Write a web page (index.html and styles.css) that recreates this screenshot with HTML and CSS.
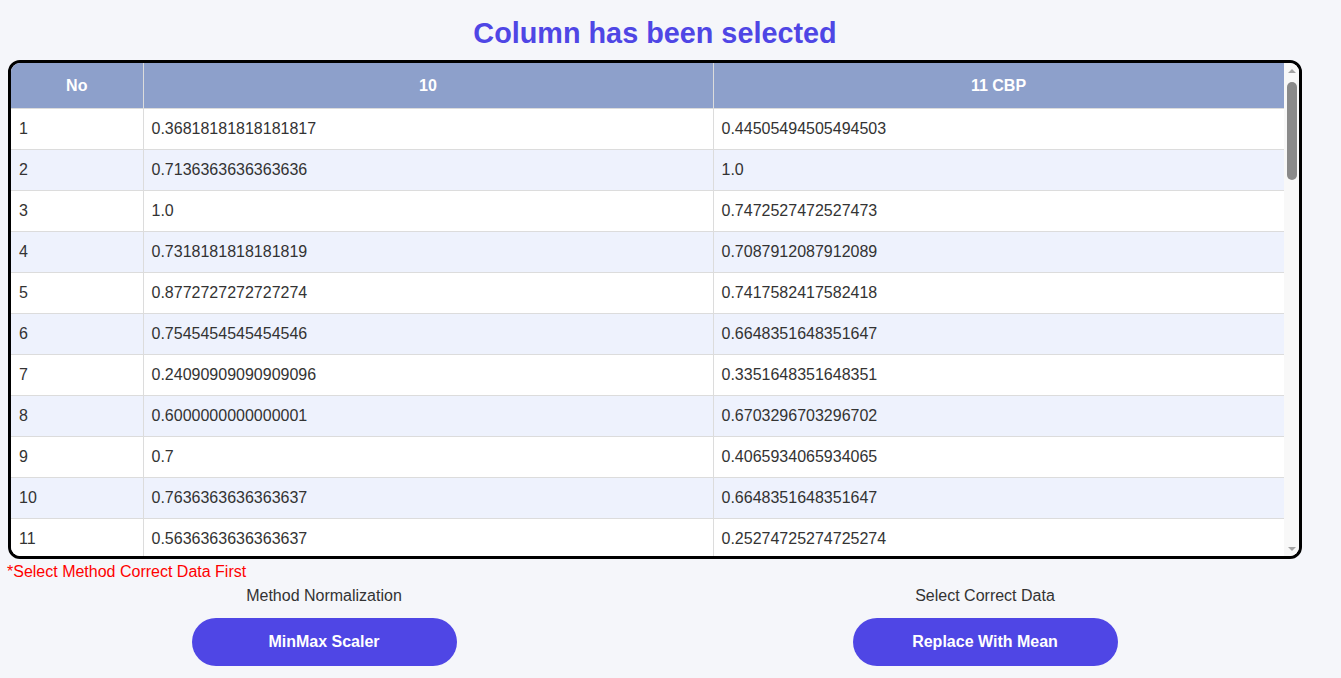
FILE: index.html
```html
<!DOCTYPE html>
<html>
<head>
<meta charset="utf-8">
<link rel="stylesheet" href="styles.css">
</head>
<body>
<div class="page">
  <h1 class="title">Column has been selected</h1>
  <div class="table-box">
    <div class="table-scroll">
    <table class="data">
      <colgroup><col class="c-no"><col class="c-a"><col class="c-b"></colgroup>
      <thead>
        <tr><th>No</th><th>10</th><th>11 CBP</th></tr>
      </thead>
      <tbody>
        <tr><td>1</td><td>0.36818181818181817</td><td>0.44505494505494503</td></tr>
        <tr><td>2</td><td>0.7136363636363636</td><td>1.0</td></tr>
        <tr><td>3</td><td>1.0</td><td>0.7472527472527473</td></tr>
        <tr><td>4</td><td>0.7318181818181819</td><td>0.7087912087912089</td></tr>
        <tr><td>5</td><td>0.8772727272727274</td><td>0.7417582417582418</td></tr>
        <tr><td>6</td><td>0.7545454545454546</td><td>0.6648351648351647</td></tr>
        <tr><td>7</td><td>0.24090909090909096</td><td>0.3351648351648351</td></tr>
        <tr><td>8</td><td>0.6000000000000001</td><td>0.6703296703296702</td></tr>
        <tr><td>9</td><td>0.7</td><td>0.4065934065934065</td></tr>
        <tr><td>10</td><td>0.7636363636363637</td><td>0.6648351648351647</td></tr>
        <tr><td>11</td><td>0.5636363636363637</td><td>0.25274725274725274</td></tr>
      </tbody>
    </table>
    </div>
    <div class="scrollbar">
      <div class="sb-btn sb-up"><span class="tri-up"></span></div>
      <div class="sb-track"><div class="sb-thumb"></div></div>
      <div class="sb-btn sb-down"><span class="tri-down"></span></div>
    </div>
  </div>
  <p class="error">*Select Method Correct Data First</p>
  <div class="controls">
    <div class="control">
      <p class="label">Method Normalization</p>
      <button class="btn">MinMax Scaler</button>
    </div>
    <div class="control">
      <p class="label">Select Correct Data</p>
      <button class="btn">Replace With Mean</button>
    </div>
  </div>
</div>
</body>
</html>
```

FILE: styles.css
```css
html, body {
  margin: 0;
  padding: 0;
  background: #f5f6fa;
  font-family: "Liberation Sans", Arial, sans-serif;
  color: #333;
}

.page {
  width: 1294px;
  margin-left: 8px;
  padding-top: 17px;
}

.title {
  margin: 0;
  text-align: center;
  font-size: 28.8px;
  line-height: 33px;
  font-weight: bold;
  color: #4f46e5;
}

.table-box {
  margin-top: 10px;
  height: 493px;
  border: 3px solid #000;
  border-radius: 12px;
  overflow: hidden;
  background: #fff;
  display: flex;
}

.table-scroll {
  width: 1273px;
  height: 493px;
  overflow: hidden;
}

.scrollbar {
  width: 15px;
  background: #f8f8f8;
  display: flex;
  flex-direction: column;
}

.sb-btn {
  height: 15px;
  display: flex;
  align-items: center;
  justify-content: center;
  padding-left: 1px;
}

.tri-up {
  width: 0;
  height: 0;
  border-left: 4px solid transparent;
  border-right: 4px solid transparent;
  border-bottom: 4px solid #a3a3a3;
}

.tri-down {
  width: 0;
  height: 0;
  border-left: 4px solid transparent;
  border-right: 4px solid transparent;
  border-top: 4px solid #a3a3a3;
}

.sb-track {
  flex: 1;
  padding: 4px 2px 0 3px;
}

.sb-thumb {
  height: 98px;
  background: #8a8a8a;
  border-radius: 5px;
}

.data {
  width: 1273px;
  border-collapse: collapse;
  table-layout: fixed;
  font-size: 16px;
}

.c-no { width: 132px; }
.c-a { width: 570px; }
.c-b { width: 571px; }

.data th {
  background: #8da0cb;
  color: #fff;
  font-weight: bold;
  text-align: center;
  height: 45px;
  padding: 0 8px;
  line-height: 18px;
  border-right: 1px solid #dcdcdc;
  border-bottom: 1px solid #dcdcdc;
}

.data td {
  height: 40px;
  padding: 0 8px;
  line-height: 18px;
  color: #333;
  border-right: 1px solid #dcdcdc;
  border-bottom: 1px solid #dcdcdc;
}

.data tbody tr:nth-child(odd) td { background: #fff; }
.data tbody tr:nth-child(even) td { background: #eef2fd; }

.error {
  margin: 4px 0 0 -1px;
  color: #ff0000;
  font-size: 16px;
  line-height: 18px;
}

.controls {
  display: grid;
  grid-template-columns: 634px 634px;
  justify-content: space-between;
  margin: 6px 0 0 -1px;
}

.control {
  display: flex;
  flex-direction: column;
  align-items: center;
}

.label {
  margin: 0;
  font-size: 16px;
  line-height: 18px;
  color: #333;
}

.btn {
  margin-top: 13px;
  width: 265px;
  height: 48px;
  border: none;
  border-radius: 24px;
  background: #4f46e5;
  color: #fff;
  font-family: "Liberation Sans", Arial, sans-serif;
  font-size: 16px;
  font-weight: bold;
}
```
